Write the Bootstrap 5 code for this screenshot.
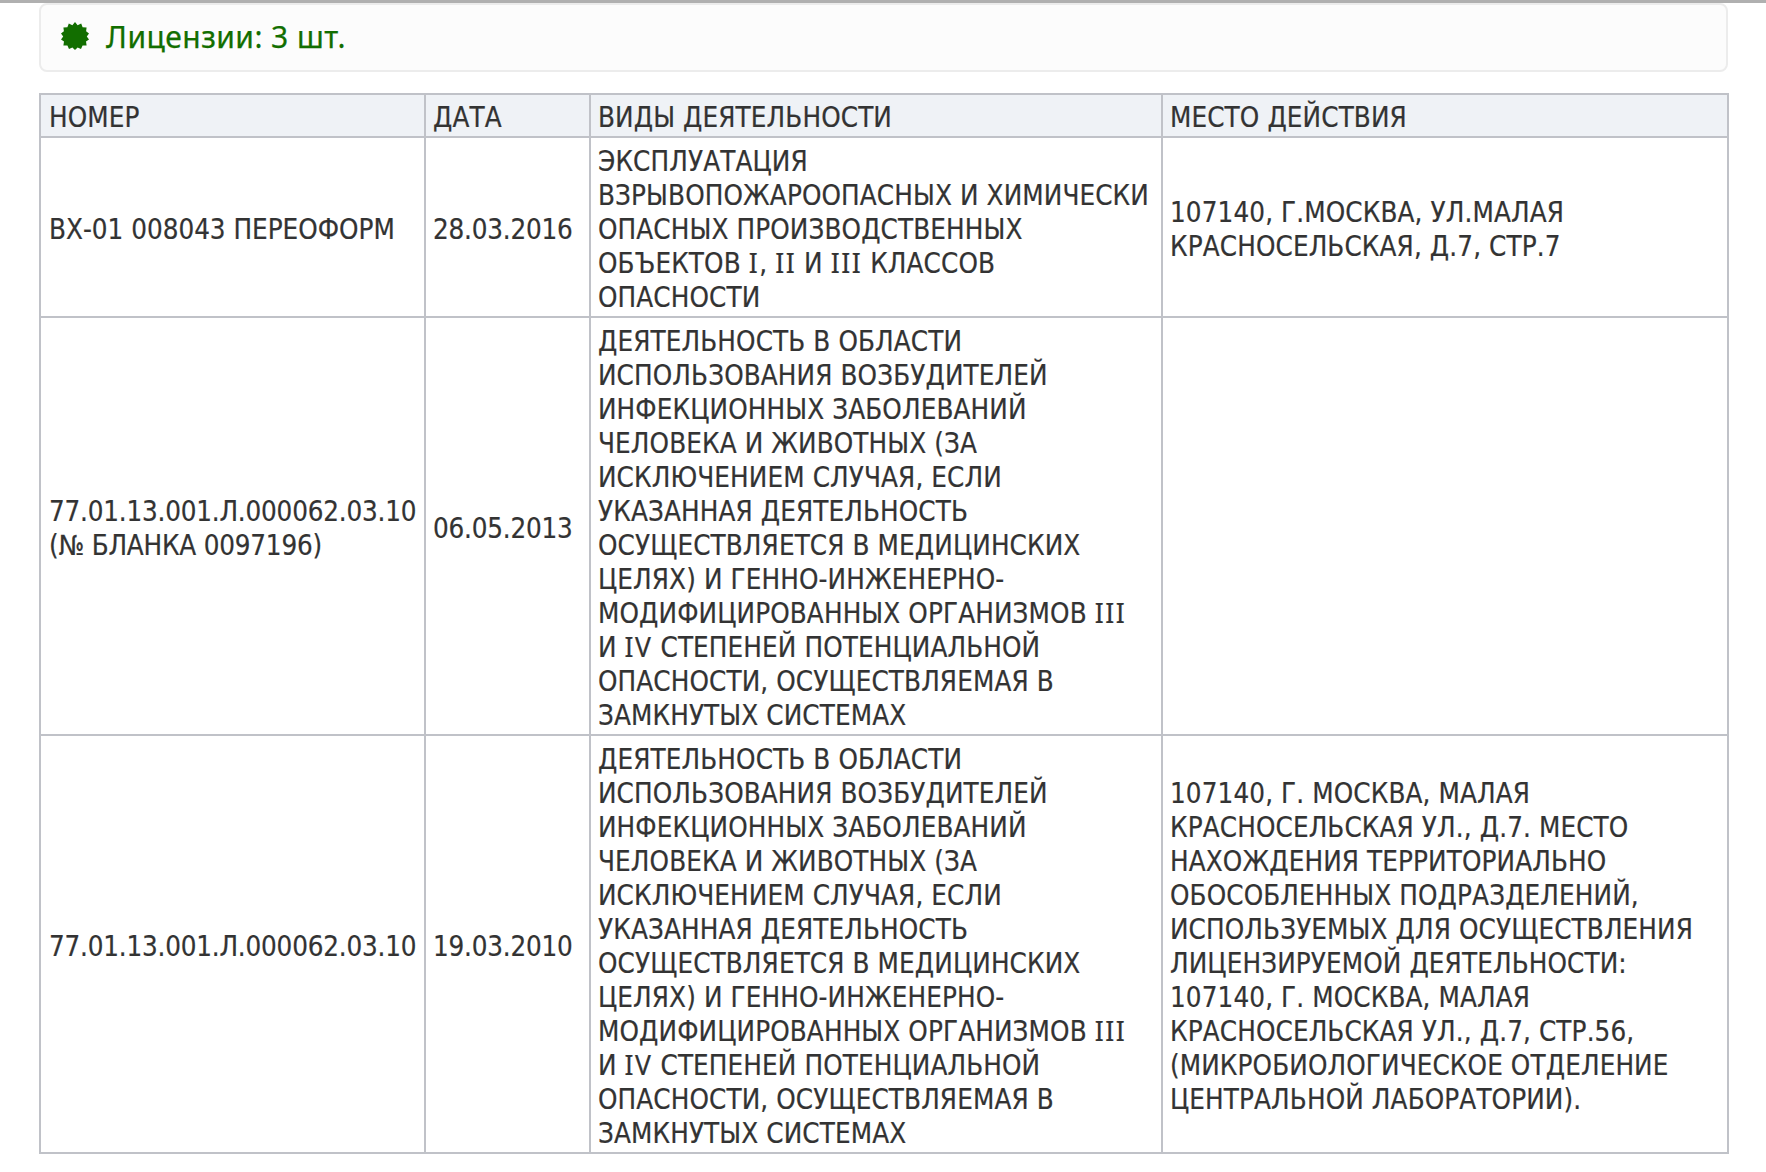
<!DOCTYPE html>
<html lang="ru"><head><meta charset="utf-8"><title>Лицензии</title>
<link rel="stylesheet" href="https://cdn.jsdelivr.net/npm/bootstrap@5.3.0/dist/css/bootstrap.min.css">
<style>
html,body{background:#fff;}
body{margin:0;border-top:3px solid #b0b0b0;padding:0 38px 0 39px;font-family:"DejaVu Sans Condensed","DejaVu Sans",sans-serif;color:#333;}
.lic-head{height:69px;background:#fcfcfc;border:2px solid #ececec;border-radius:8px;padding:0 0 3px 20px;color:#126e00;font-family:"Noto Sans",sans-serif;font-size:30px;letter-spacing:.45px;margin-bottom:21px;-webkit-text-stroke:.25px #126e00;}
.lic-head svg{width:28px;height:28px;margin-right:17px;}
.lic-table{width:1688px;table-layout:fixed;border-collapse:collapse;margin:0;font-size:27.5px;line-height:34px;letter-spacing:.12px;-webkit-text-stroke:.2px #333;}
.lic-table th,.lic-table td{border:2px solid #c0c2c8;padding:6px 8px 2px;vertical-align:middle;font-weight:400;color:#333;}
.lic-table th{background:#eff2f6;padding:5px 8px 2px;}
.lic-table th+th,.lic-table td+td{padding-left:7px;}
.lic-table td.lic-wide{padding-right:10px;}
.lic-num{letter-spacing:-.2px;}
.lic-code{letter-spacing:0;}
.lic-rom{font-family:"Noto Sans",sans-serif;font-size:26.5px;line-height:0;letter-spacing:1.5px;}
</style></head><body>
<div class="lic-head d-flex align-items-center">
<svg viewBox="0 0 28 28"><polygon fill="#126e00" points="14,0 16.6,3.2 20.2,1.6 21.6,5.3 25.6,5.4 25.1,9.3 28,11.5 25.8,14.5 28,17.5 25,19.4 25.6,23.4 21.6,23.4 20,27 16.6,25.4 14,28 11.4,25.4 8,27 6.4,23.4 2.4,23.4 3,19.4 0,17.5 2.2,14.5 0,11.5 2.9,9.3 2.4,5.4 6.4,5.3 7.8,1.6 11.4,3.2"/></svg>
<span>Лицензии: 3 шт.</span></div>
<table class="lic-table">
<colgroup><col style="width:385px"><col style="width:165px"><col style="width:572px"><col style="width:566px"></colgroup>
<thead><tr><th>НОМЕР</th><th>ДАТА</th><th>ВИДЫ ДЕЯТЕЛЬНОСТИ</th><th>МЕСТО ДЕЙСТВИЯ</th></tr></thead>
<tbody>
<tr><td class="lic-code">ВХ-01 008043 ПЕРЕОФОРМ</td><td class="lic-num">28.03.2016</td><td class="lic-wide">ЭКСПЛУАТАЦИЯ ВЗРЫВОПОЖАРООПАСНЫХ И ХИМИЧЕСКИ ОПАСНЫХ ПРОИЗВОДСТВЕННЫХ ОБЪЕКТОВ <span class="lic-rom">I</span>, <span class="lic-rom">II</span> И <span class="lic-rom">III</span> КЛАССОВ ОПАСНОСТИ</td><td>107140, Г.МОСКВА, УЛ.МАЛАЯ КРАСНОСЕЛЬСКАЯ, Д.7, СТР.7</td></tr>
<tr><td class="lic-num">77.01.13.001.Л.000062.03.10 (№ БЛАНКА 0097196)</td><td class="lic-num">06.05.2013</td><td class="lic-wide">ДЕЯТЕЛЬНОСТЬ В ОБЛАСТИ ИСПОЛЬЗОВАНИЯ ВОЗБУДИТЕЛЕЙ ИНФЕКЦИОННЫХ ЗАБОЛЕВАНИЙ ЧЕЛОВЕКА И ЖИВОТНЫХ (ЗА ИСКЛЮЧЕНИЕМ СЛУЧАЯ, ЕСЛИ УКАЗАННАЯ ДЕЯТЕЛЬНОСТЬ ОСУЩЕСТВЛЯЕТСЯ В МЕДИЦИНСКИХ ЦЕЛЯХ) И ГЕННО-ИНЖЕНЕРНО-МОДИФИЦИРОВАННЫХ ОРГАНИЗМОВ <span class="lic-rom">III</span> И <span class="lic-rom">IV</span> СТЕПЕНЕЙ ПОТЕНЦИАЛЬНОЙ ОПАСНОСТИ, ОСУЩЕСТВЛЯЕМАЯ В ЗАМКНУТЫХ СИСТЕМАХ</td><td></td></tr>
<tr><td class="lic-num">77.01.13.001.Л.000062.03.10</td><td class="lic-num">19.03.2010</td><td class="lic-wide">ДЕЯТЕЛЬНОСТЬ В ОБЛАСТИ ИСПОЛЬЗОВАНИЯ ВОЗБУДИТЕЛЕЙ ИНФЕКЦИОННЫХ ЗАБОЛЕВАНИЙ ЧЕЛОВЕКА И ЖИВОТНЫХ (ЗА ИСКЛЮЧЕНИЕМ СЛУЧАЯ, ЕСЛИ УКАЗАННАЯ ДЕЯТЕЛЬНОСТЬ ОСУЩЕСТВЛЯЕТСЯ В МЕДИЦИНСКИХ ЦЕЛЯХ) И ГЕННО-ИНЖЕНЕРНО-МОДИФИЦИРОВАННЫХ ОРГАНИЗМОВ <span class="lic-rom">III</span> И <span class="lic-rom">IV</span> СТЕПЕНЕЙ ПОТЕНЦИАЛЬНОЙ ОПАСНОСТИ, ОСУЩЕСТВЛЯЕМАЯ В ЗАМКНУТЫХ СИСТЕМАХ</td><td>107140, Г. МОСКВА, МАЛАЯ КРАСНОСЕЛЬСКАЯ УЛ., Д.7. МЕСТО НАХОЖДЕНИЯ ТЕРРИТОРИАЛЬНО ОБОСОБЛЕННЫХ ПОДРАЗДЕЛЕНИЙ, ИСПОЛЬЗУЕМЫХ ДЛЯ ОСУЩЕСТВЛЕНИЯ ЛИЦЕНЗИРУЕМОЙ ДЕЯТЕЛЬНОСТИ: 107140, Г. МОСКВА, МАЛАЯ КРАСНОСЕЛЬСКАЯ УЛ., Д.7, СТР.56, (МИКРОБИОЛОГИЧЕСКОЕ ОТДЕЛЕНИЕ ЦЕНТРАЛЬНОЙ ЛАБОРАТОРИИ).</td></tr>
</tbody></table>
<script src="https://cdn.jsdelivr.net/npm/bootstrap@5.3.0/dist/js/bootstrap.bundle.min.js"></script>
</body></html>
